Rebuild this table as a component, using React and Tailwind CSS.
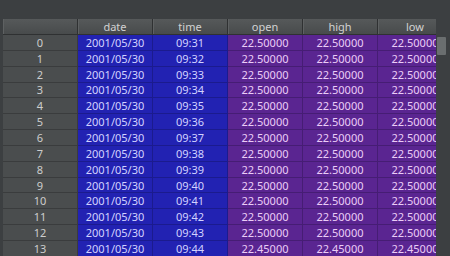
import React from 'react';

const cols = ['date', 'time', 'open', 'high', 'low'];

const rows = Array.from({ length: 14 }, (_, i) => {
  const price = i === 13 ? '22.45000' : '22.50000';
  return {
    idx: i,
    date: '2001/05/30',
    time: `09:${31 + i}`,
    open: price,
    high: price,
    low: price,
  };
});

const HeaderCell = ({ children }) => (
  <div className="w-[75px] shrink-0 h-full flex items-center justify-center border-r border-[#2f3132] shadow-[inset_1px_0_0_#5e6162] bg-gradient-to-b from-[#56595a] to-[#484b4c] text-[#d2d2d2]">
    {children}
  </div>
);

export default function App() {
  return (
    <div
      className="w-[450px] h-[256px] overflow-hidden bg-[#3c3f41] pt-[19px] pl-[3px] text-[11px] leading-none"
      style={{ fontFamily: '"Noto Sans", "Liberation Sans", sans-serif' }}
    >
      {/* header */}
      <div className="w-[433px] h-[16px] overflow-hidden flex border-b border-[#2f3132]">
        <HeaderCell>{''}</HeaderCell>
        {cols.map((c) => (
          <HeaderCell key={c}>{c}</HeaderCell>
        ))}
      </div>

      <div className="flex">
        {/* body */}
        <div className="w-[433px] overflow-hidden shrink-0">
          {rows.map((r) => (
            <div key={r.idx} className="flex h-[15.85px]">
              <div className="w-[75px] shrink-0 flex items-center justify-center bg-[#4a4d4e] border-r border-b border-[#3a3c3d] text-[#cdcdcd]">
                {r.idx}
              </div>
              {['date', 'time'].map((k) => (
                <div
                  key={k}
                  className="w-[75px] shrink-0 flex items-center justify-center bg-[#2222b2] border-r border-b border-[#1b1b8e] text-[#d2d2ff]"
                >
                  {r[k]}
                </div>
              ))}
              {['open', 'high', 'low'].map((k) => (
                <div
                  key={k}
                  className="w-[75px] shrink-0 flex items-center justify-center bg-[#5a2591] border-r border-b border-[#461d74] text-[#ebcdf7]"
                >
                  {r[k]}
                </div>
              ))}
            </div>
          ))}
        </div>

        {/* scrollbar */}
        <div className="flex-1 pt-[2px] pl-[1px]">
          <div className="w-[9px] h-[18px] bg-[#6a6e6f] rounded-[1px]" />
        </div>
      </div>
    </div>
  );
}
